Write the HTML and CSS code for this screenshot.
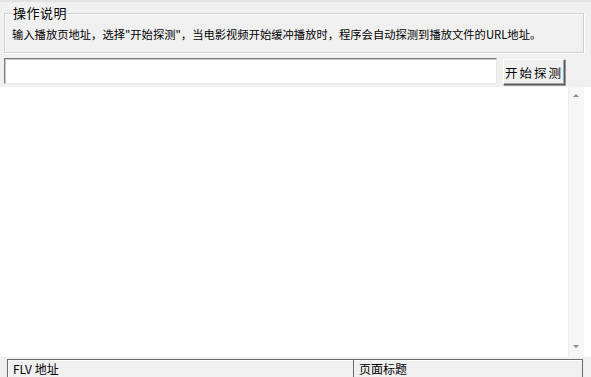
FILE: index.html
```html
<html>
<head>
    <meta charset="utf-8">
    <link rel="stylesheet" href="styles.css">
</head>
<body>
    <div class="topline"></div>
    <fieldset class="group">
        <legend>操作说明</legend>
        <div class="tip">输入播放页地址，选择"开始探测"，当电影视频开始缓冲播放时，程序会自动探测到播放文件的URL地址。</div>
    </fieldset>

    <div class="bar">
        <input class="url" type="text" value=""/>
        <button class="start">开始探测</button>
    </div>

    <div class="list">
        <div class="rows"></div>
        <div class="scroll">
            <span class="arrow up"></span>
            <span class="arrow down"></span>
        </div>
    </div>

    <div class="header">
        <div class="col first">FLV 地址</div>
        <div class="col">页面标题</div>
    </div>
</body>
</html>
```

FILE: styles.css
```css
body {
    margin: 0;
    background: #f0f0f0;
    font-family: "Noto Sans CJK SC", "DejaVu Sans", sans-serif;
    font-size: 12px;
    color: #000;
    overflow: hidden;
}

.topline {
    height: 2px;
    background: #e2e2e2;
}

.group {
    margin: 3px 7px 0 4px;
    padding: 2px 8px 10px 7px;
    border: 1px solid #cfcfcf;
    box-shadow: inset 1px 1px 0 #fff, 1px 1px 0 #fff;
}

.group legend {
    margin-left: 0;
    padding: 0 1px;
    font-size: 13px;
    line-height: 16px;
    letter-spacing: 0.5px;
}

.tip {
    line-height: 16px;
    font-size: 11.3px;
    margin-top: 3px;
}

.bar {
    display: flex;
    align-items: flex-start;
    margin-top: 5px;
    padding-left: 4px;
}

.url {
    width: 493px;
    height: 26px;
    margin: 0;
    border: 1px solid #a0a0a0;
    border-top-color: #7a7a7a;
    border-left-color: #7a7a7a;
    border-bottom-color: #e6e6e6;
    border-right-color: #e6e6e6;
    box-shadow: inset 1px 1px 0 #c8c8c8;
    background: #fff;
    outline: none;
}

.start {
    margin: 1px 0 0 6px;
    width: 62px;
    height: 26px;
    padding: 0;
    background: #f0f0f0;
    border: 1px solid #fff;
    border-right-color: #5a5a5a;
    border-bottom-color: #5a5a5a;
    box-shadow: 1px 1px 0 #9a9a9a, inset -1px -1px 0 #a8a8a8;
    font-family: "Noto Sans CJK SC", sans-serif;
    font-size: 12.5px;
    letter-spacing: 2px;
    color: #000;
}

.list {
    display: flex;
    height: 270px;
    margin-top: 2px;
    background: #fff;
}

.rows {
    flex: 1;
    margin-left: 4px;
}

.scroll {
    position: relative;
    width: 15px;
    margin-right: 7px;
    background: #f6f6f6;
    border-left: 1px solid #ececec;
}

.arrow {
    position: absolute;
    left: 4px;
    width: 0;
    height: 0;
    border-left: 3px solid transparent;
    border-right: 3px solid transparent;
}

.arrow.up {
    top: 7px;
    border-bottom: 3px solid #8a8a8a;
}

.arrow.down {
    bottom: 9px;
    border-top: 3px solid #8a8a8a;
}

.header {
    display: flex;
    height: 19px;
    margin: 2px 8px 0 7px;
    border: 1px solid #6a6a6a;
    border-bottom: none;
    box-shadow: inset 1px 1px 0 #fff;
}

.col {
    padding: 1px 0 0 5px;
    font-size: 12px;
    line-height: 15px;
}

.col.first {
    width: 340px;
    border-right: 1px solid #6a6a6a;
}
```
